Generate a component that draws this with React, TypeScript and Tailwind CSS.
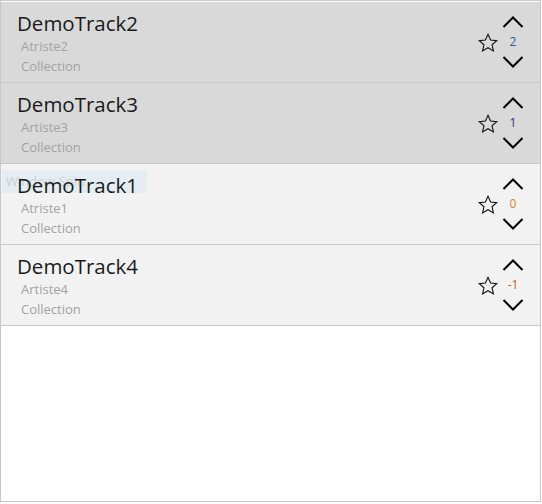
import React from 'react'

interface Track {
  title: string
  artist: string
  album: string
  votes: number
  selected: boolean
}

const tracks: Track[] = [
  { title: 'DemoTrack2', artist: 'Atriste2', album: 'Collection', votes: 2, selected: true },
  { title: 'DemoTrack3', artist: 'Artiste3', album: 'Collection', votes: 1, selected: true },
  { title: 'DemoTrack1', artist: 'Atriste1', album: 'Collection', votes: 0, selected: false },
  { title: 'DemoTrack4', artist: 'Artiste4', album: 'Collection', votes: -1, selected: false },
]

const voteColor = (v: number) => {
  if (v === 2) return 'text-[#2a5f9e]'
  if (v === 1) return 'text-[#45298a]'
  if (v === 0) return 'text-[#d9821e]'
  return 'text-[#c0601e]'
}

function Star() {
  return (
    <svg width="22" height="22" viewBox="0 0 24 24" fill="none" stroke="#111" strokeWidth="1.2" strokeLinejoin="miter">
      <path d="M12 2.5l2.8 6.3 6.7.6-5.1 4.5 1.5 6.7L12 17.1l-5.9 3.5 1.5-6.7-5.1-4.5 6.7-.6z" />
    </svg>
  )
}

function Chevron({ up }: { up?: boolean }) {
  return (
    <svg width="22" height="14" viewBox="0 0 22 14" fill="none" stroke="#000" strokeWidth="2">
      {up ? <path d="M1.5 12L11 2.5 20.5 12" /> : <path d="M1.5 2L11 11.5 20.5 2" />}
    </svg>
  )
}

function TrackRow({ track }: { track: Track }) {
  return (
    <div
      className={`flex h-[81px] items-center border-b border-[#c9c9c9] ${
        track.selected ? 'bg-[#d9d9d9]' : 'bg-[#f2f2f2]'
      }`}
    >
      <div className="flex flex-1 flex-col pl-4 pt-[1px]">
        <span className="relative z-10 text-[20.5px] leading-[26px] text-[#1a1a1a]">{track.title}</span>
        <span className="pl-[4px] text-[13px] leading-[20px] text-[#a3a3a3]">{track.artist}</span>
        <span className="pl-[4px] text-[13px] leading-[20px] text-[#a3a3a3]">{track.album}</span>
      </div>
      <div className="flex items-center pr-[16px]">
        <div className="mr-[3px] mt-[2px]">
          <Star />
        </div>
        <div className="flex w-[22px] flex-col items-center">
          <Chevron up />
          <span className={`text-[12px] leading-[26px] ${voteColor(track.votes)}`}>{track.votes}</span>
          <Chevron />
        </div>
      </div>
    </div>
  )
}

export default function App() {
  return (
    <div className="h-[504px] w-[542px] bg-white" style={{ fontFamily: '"Open Sans", "Noto Sans", sans-serif' }}>
      <div className="relative h-[502px] w-[541px] border border-[#c9c9c9] bg-white pt-[1px]">
        {tracks.map((t) => (
          <TrackRow key={t.title} track={t} />
        ))}
        <div className="absolute left-[1px] top-[170px] flex h-[22px] w-[145px] items-center bg-[#e3edf2] pl-[4px] text-[13px] text-[#ccd2d6]">
          Window Spin
        </div>
      </div>
    </div>
  )
}
